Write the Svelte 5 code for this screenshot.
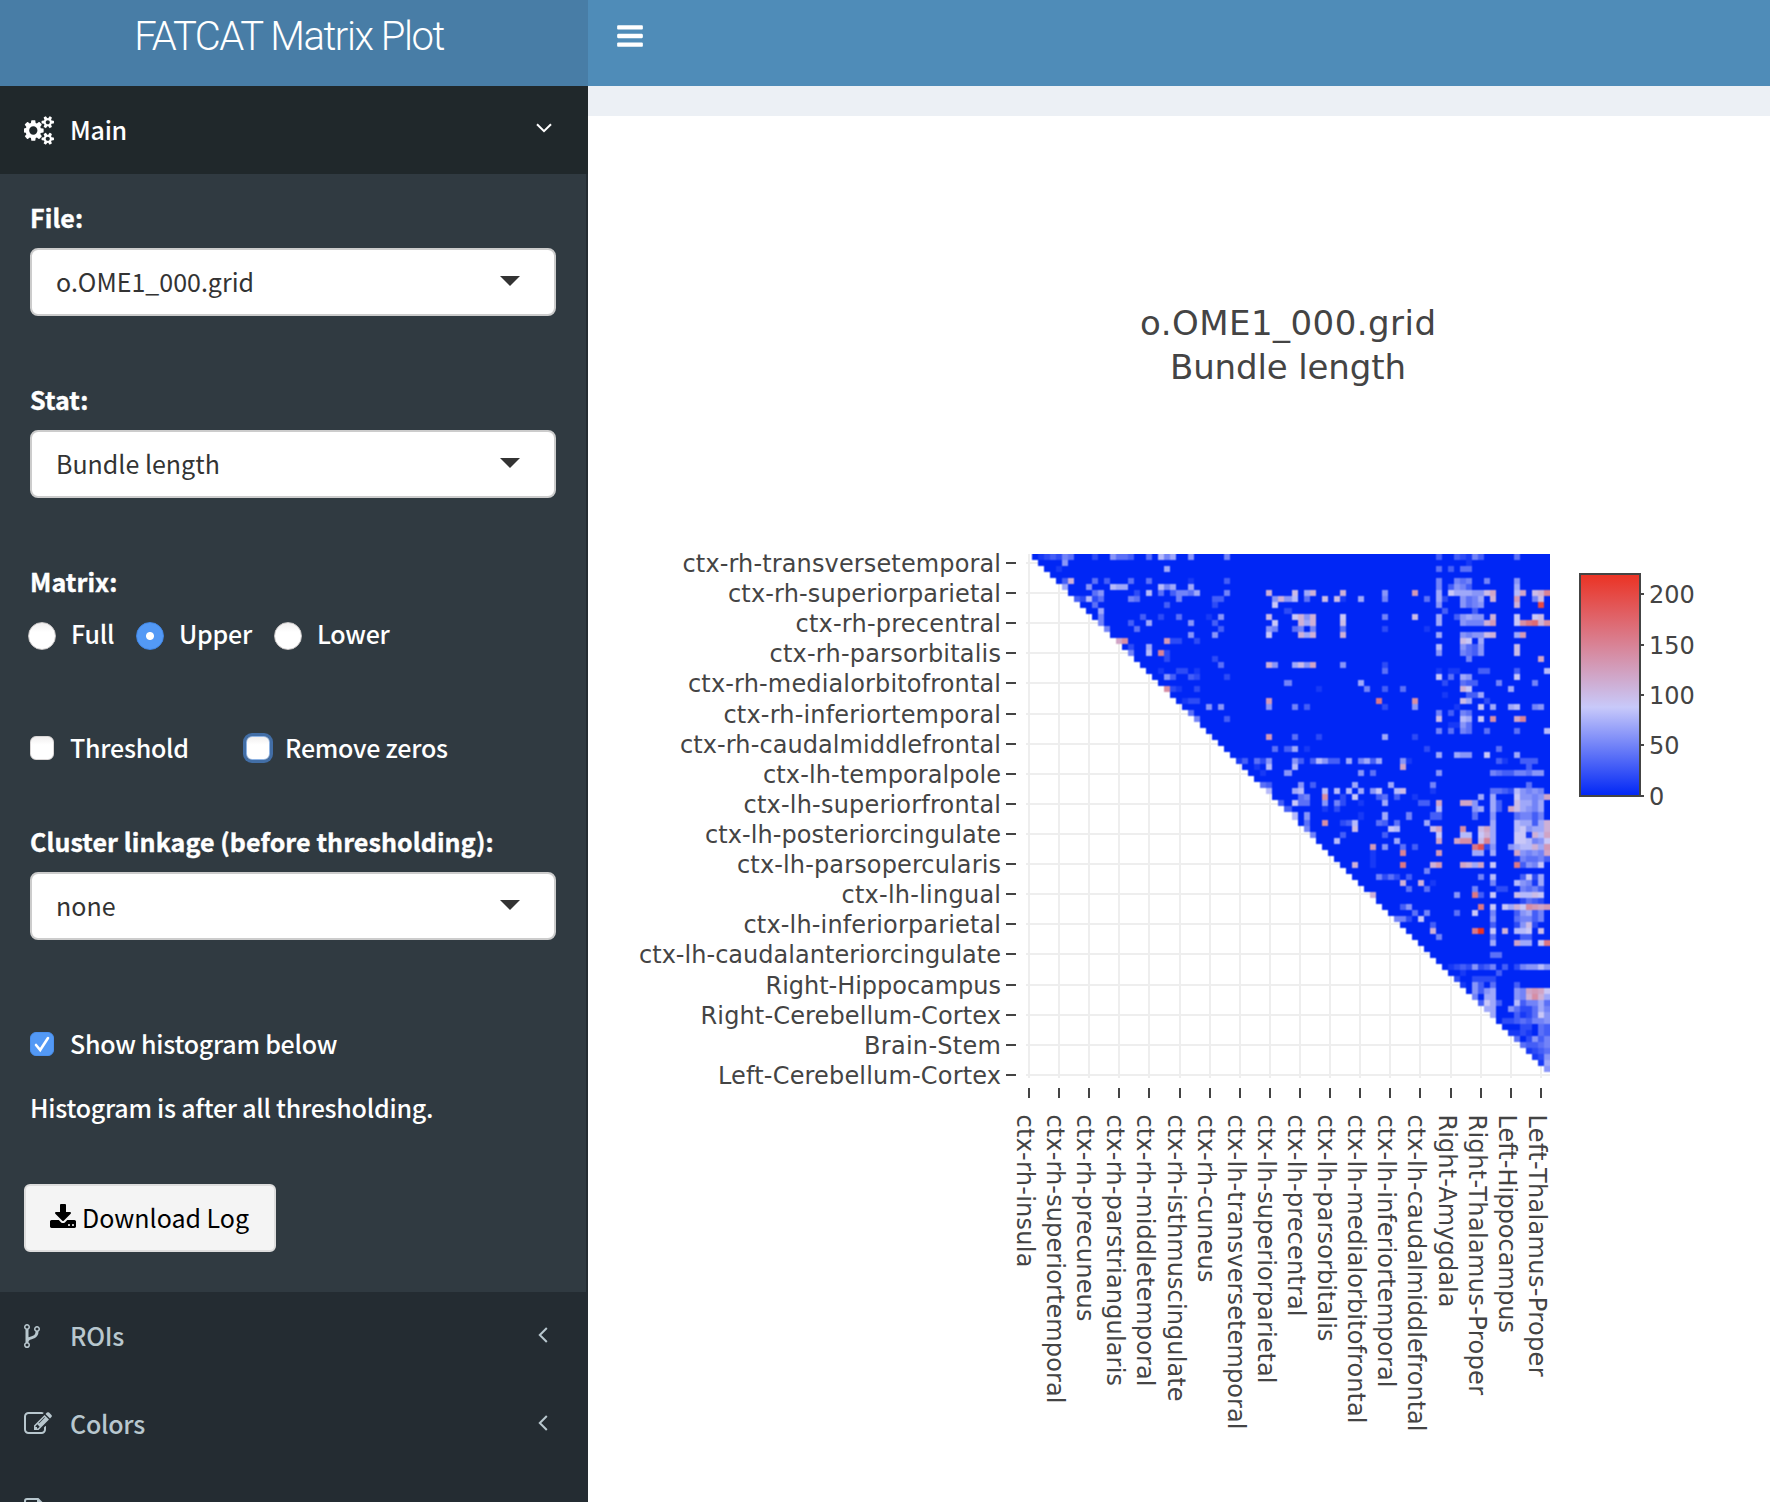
<script>
  import { onMount } from 'svelte';

  const icons = {
    bars: 'M1664 1344v128q0 26-19 45t-45 19h-1408q-26 0-45-19t-19-45v-128q0-26 19-45t45-19h1408q26 0 45 19t19 45zm0-512v128q0 26-19 45t-45 19h-1408q-26 0-45-19t-19-45v-128q0-26 19-45t45-19h1408q26 0 45 19t19 45zm0-512v128q0 26-19 45t-45 19h-1408q-26 0-45-19t-19-45v-128q0-26 19-45t45-19h1408q26 0 45 19t19 45z',
    download: 'M1344 1344q0-26-19-45t-45-19-45 19-19 45 19 45 45 19 45-19 19-45zm256 0q0-26-19-45t-45-19-45 19-19 45 19 45 45 19 45-19 19-45zm128-224v320q0 40-28 68t-68 28h-1472q-40 0-68-28t-28-68v-320q0-40 28-68t68-28h465l135 136q58 56 136 56t136-56l136-136h464q40 0 68 28t28 68zm-325-569q17 41-14 70l-448 448q-18 19-45 19t-45-19l-448-448q-31-29-14-70 17-39 59-39h256v-448q0-26 19-45t45-19h256q26 0 45 19t19 45v448h256q42 0 59 39z',
    cogs: 'M832 896q0-106-75-181t-181-75-181 75-75 181 75 181 181 75 181-75 75-181zm768 512q0-52-38-90t-90-38-90 38-38 90q0 53 37.5 90.5t90.5 37.5 90.5-37.5 37.5-90.5zm0-1024q0-52-38-90t-90-38-90 38-38 90q0 53 37.5 90.5t90.5 37.5 90.5-37.5 37.5-90.5zm-384 421v185q0 10-7 19.5t-16 10.5l-155 24q-11 35-32 76 34 48 90 115 7 11 7 20 0 12-7 19-23 30-82.5 89.5t-78.5 59.5q-11 0-21-7l-115-90q-37 19-77 31-11 108-23 155-7 24-30 24h-186q-11 0-20-7.5t-10-17.5l-23-153q-34-10-75-31l-118 89q-7 7-20 7-11 0-21-8-144-133-144-160 0-9 7-19 10-14 41-53t47-61q-23-44-35-82l-152-24q-10-1-17-9.5t-7-19.5v-185q0-10 7-19.5t16-10.5l155-24q11-35 32-76-34-48-90-115-7-11-7-20 0-12 7-20 22-30 82-89t79-59q11 0 21 7l115 90q34-18 77-32 11-108 23-154 7-24 30-24h186q11 0 20 7.5t10 17.5l23 153q34 10 75 31l118-89q8-7 20-7 11 0 21 8 144 133 144 160 0 8-7 19-12 16-42 54t-45 60q23 48 34 82l152 23q10 2 17 10.5t7 19.5zm640 533v140q0 16-149 31-12 27-30 52 51 113 51 138 0 4-4 7-122 71-124 71-8 0-46-47t-52-68q-20 2-30 2t-30-2q-14 21-52 68t-46 47q-2 0-124-71-4-3-4-7 0-25 51-138-18-25-30-52-149-15-149-31v-140q0-16 149-31 13-29 30-52-51-113-51-138 0-4 4-7 4-2 35-20t59-34 30-16q8 0 46 46.5t52 67.5q20-2 30-2t30 2q51-71 92-112l6-2q4 0 124 70 4 3 4 7 0 25-51 138 17 23 30 52 149 15 149 31zm0-1024v140q0 16-149 31-12 27-30 52 51 113 51 138 0 4-4 7-122 71-124 71-8 0-46-47t-52-68q-20 2-30 2t-30-2q-14 21-52 68t-46 47q-2 0-124-71-4-3-4-7 0-25 51-138-18-25-30-52-149-15-149-31v-140q0-16 149-31 13-29 30-52-51-113-51-138 0-4 4-7 4-2 35-20t59-34 30-16q8 0 46 46.5t52 67.5q20-2 30-2t30 2q51-71 92-112l6-2q4 0 124 70 4 3 4 7 0 25-51 138 17 23 30 52 149 15 149 31z',
    fork: 'M672 1472q0-40-28-68t-68-28-68 28-28 68 28 68 68 28 68-28 28-68zm0-1152q0-40-28-68t-68-28-68 28-28 68 28 68 68 28 68-28 28-68zm640 128q0-40-28-68t-68-28-68 28-28 68 28 68 68 28 68-28 28-68zm96 0q0 52-26 96.5t-70 69.5q-2 287-226 414-67 38-203 81-128 40-169.5 71t-41.5 100v26q44 25 70 69.5t26 96.5q0 80-56 136t-136 56-136-56-56-136q0-52 26-96.5t70-69.5v-820q-44-25-70-69.5t-26-96.5q0-80 56-136t136-56 136 56 56 136q0 52-26 96.5t-70 69.5v497q54-26 154-57 55-17 87.5-29.5t70.5-31 59-39.5 40.5-51 28-69.5 8.5-91.5q-44-25-70-69.5t-26-96.5q0-80 56-136t136-56 136 56 56 136z',
    edit: 'M888 1184l116-116-152-152-116 116v56h96v96h56zm440-720q-16-16-33 1l-350 350q-17 17-1 33t33-1l350-350q17-17 1-33zm80 594v190q0 119-84.5 203.5t-203.5 84.5h-832q-119 0-203.5-84.5t-84.5-203.5v-832q0-119 84.5-203.5t203.5-84.5h832q63 0 117 25 15 7 18 23 3 17-9 29l-49 49q-14 14-32 8-23-6-45-6h-832q-66 0-113 47t-47 113v832q0 66 47 113t113 47h832q66 0 113-47t47-113v-126q0-13 9-22l64-64q15-15 35-7t20 29zm-96-738l288 288-672 672h-288v-288zm444 132l-92 92-288-288 92-92q28-28 68-28t68 28l152 152q28 28 28 68t-28 68z'
  };

  // label text and its drawn length
  const yLabels = [
    ['ctx-rh-transversetemporal', 318.5], ['ctx-rh-superiorparietal', 273], ['ctx-rh-precentral', 205.5],
    ['ctx-rh-parsorbitalis', 231.5], ['ctx-rh-medialorbitofrontal', 313], ['ctx-rh-inferiortemporal', 277.5],
    ['ctx-rh-caudalmiddlefrontal', 321], ['ctx-lh-temporalpole', 238], ['ctx-lh-superiorfrontal', 257.5],
    ['ctx-lh-posteriorcingulate', 296], ['ctx-lh-parsopercularis', 264], ['ctx-lh-lingual', 159.5],
    ['ctx-lh-inferiorparietal', 257.5], ['ctx-lh-caudalanteriorcingulate', 362], ['Right-Hippocampus', 235.5],
    ['Right-Cerebellum-Cortex', 300.5], ['Brain-Stem', 137], ['Left-Cerebellum-Cortex', 283]
  ];
  const xLabels = [
    ['ctx-rh-insula', 153], ['ctx-rh-superiortemporal', 289], ['ctx-rh-precuneus', 207],
    ['ctx-rh-parstriangularis', 271.5], ['ctx-rh-middletemporal', 272], ['ctx-rh-isthmuscingulate', 287],
    ['ctx-rh-cuneus', 168], ['ctx-lh-transversetemporal', 315], ['ctx-lh-superiorparietal', 269],
    ['ctx-lh-precentral', 202], ['ctx-lh-parsorbitalis', 227], ['ctx-lh-medialorbitofrontal', 309],
    ['ctx-lh-inferiortemporal', 273], ['ctx-lh-caudalmiddlefrontal', 317], ['Right-Amygdala', 193],
    ['Right-Thalamus-Proper', 280.5], ['Left-Hippocampus', 218.5], ['Left-Thalamus-Proper', 262]
  ];
  const offset = (i) => 30 * i + (i >= 5 ? 1 : 0) + (i >= 14 ? 1 : 0);
  const barTicks = [[200, 594], [150, 645], [100, 695], [50, 745], [0, 796]];

  // One string per matrix row: a start column, then one letter per cell
  // (a = 10, b = 20, ...); cells that are not listed are zero.
  const rows = [
    '2ab4cbed11b14fdec16d20d22heg27f33e68c71cba74ec81d',
    '6f73a',
    '5a23g68d70c72dd',
    '',
    '6ck11d13c17d20d27a33c68e71ede76e81f',
    '6g10f14hgg22heg27g68e70cfec81g',
    '11df18b20h22d24ceedg33e40k44j46gk52k59f64m68g70igggffjl81hl84jko',
    '8cbhbd17ed25e31cc41fkfh46d49j51ja55g59e66d68gb72fdeg77k81m84ej',
    '11d23c31b41i68f72fdef81k85t',
    '12g43b69c74c',
    '12e19c22b25d30a32f40j44ikfk52i59e64j68g71cfgff77k81i84ij',
    '12e17c20g27f31c41i45kgk52j68g72feeekm81inpqkn',
    '13e18d32c40fe44de47e52d59b66a',
    '27f31f40i45kgk52k68g72feffjk81gm',
    '15ln23m24bb28b72ji75g',
    '17b20g68h72fdcf81j',
    '17e20h22ob68f72edcf81j',
    '23b31b73e85l',
    '32d40kf44gjfl52f59b',
    '22a25bb28a59d68a70aa75cc81c86h',
    '23fc27cb33b68i70d72gf81i',
    '43e55g69b72dcc78e84e',
    '23nba28b48a56e59c62d72ki80g',
    '69a73ccg',
    '26abb40m58p64n72jg76b',
    '30f32f40f44e46c59b64f71a75i77g80gh84ef',
    '27d68e70c72ed',
    '28e33c68j72hg75i77n81lo',
    '70aafd',
    '68e70d72ed76d81d86h',
    '40m44d48b59g64b',
    '',
    '41d43cg46a66b78d',
    '68g71gff76i81g',
    '35ac38dbf44fc47chfcc53g55egcg62fa78ca82ccc',
    '38a40h44h62l83c',
    '39a43f55f57d68f77edcceedff',
    '',
    '39dc45f47c54g60g67e83d',
    '40h44gh49h51h53h55g57fi61hj67a77ddcbhfefe',
    '45de49n52b54i58cd61c64a75g77g81iffefl',
    '42c44idd49f51eb55a59g65cc68l72llf77gc81jggeg',
    '43c49a51b68h74fg77gc80ljgfeg',
    '44h46f55a59g63e67cc74d77f81deece',
    '46d49n52bch58dc61d66g77g81hggcgk',
    '46e54j60ih67jl72n75jlg81hifggk',
    '47e52c59c68i72hh75ikg81iiakhl',
    '51h61g68l71lnn75jog81iihefi',
    '57m59f62d64c74psb77f80fghhkgm',
    '57a62o68m74gg77g81lfefel',
    '57a81aeddec',
    '54k57a62p67km72lkgl77i81pcfei',
    '66e',
    '58ebdb63c75e77h82cibg',
    '62k65k67a77e81hfeag',
    '63d66d74e78bb82edec',
    '57k71f74pc77i81jhhji',
    '82bdcb',
    '62cf75p77i79igkinmlm',
    '64d66e71d74i77e81cfgce',
    '61eeb65i77f81deece',
    '67c77c81bfjb',
    '67k74pv77i79k81hhi85j',
    '68e77d82cc',
    '77g81lgg85ip',
    '',
    '77dd',
    '',
    '70abcbfbce79c81beffhf',
    '72a78c',
    '71b74bbbb',
    '72a74fc77d81c',
    '74fcfg81felmli',
    '74e76gg81feknkg',
    '75cigc81hceegd',
    '76gg80fdbbdge',
    '77g81cabdif',
    '79bbcdceef',
    '82bb85dc',
    '80aab83a85dc',
    '81d83bfce',
    '82dccde',
    '83abcd',
    '84abf',
    '85ag',
    '86f'
  ];

  const stops = [[0, [0, 38, 245]], [88, [200, 201, 250]], [220, [235, 50, 35]]];
  function colour(v) {
    const [lo, hi] = v <= 88 ? [stops[0], stops[1]] : [stops[1], stops[2]];
    const t = (v - lo[0]) / (hi[0] - lo[0]);
    return `rgb(${lo[1].map((c, i) => Math.round(c + (hi[1][i] - c) * t)).join(',')})`;
  }

  let canvas;
  // Cells are 3 units wide; the middle one takes the leftover unit.
  const edge = (i) => 3 * i + (i > 43 ? 1 : 0);
  onMount(() => {
    const ctx = canvas.getContext('2d');
    const cell = (r, c, v) => {
      ctx.fillStyle = colour(v);
      ctx.fillRect(edge(c), edge(r), edge(c + 1) - edge(c), edge(r + 1) - edge(r));
    };
    rows.forEach((row, r) => {
      for (let c = r + 1; c < 87; c++) cell(r, c, 0);
      for (const [, start, run] of row.matchAll(/(\d+)([a-z]+)/g)) {
        [...run].forEach((ch, k) => {
          const c = +start + k;
          if (c > r && c < 87) cell(r, c, (ch.charCodeAt(0) - 96) * 10);
        });
      }
    });
  });
</script>

{#snippet icon(name, w = 1792)}
  <svg class="icon" class:wide={w > 1792} viewBox="0 0 {w} 1792"><path d={icons[name]} /></svg>
{/snippet}

{#snippet select(label, value)}
  <div class="field">
    <div class="label">{label}</div>
    <div class="select"><span>{value}</span><i class="caret"></i></div>
  </div>
{/snippet}

<div class="app">
  <aside>
    <div class="logo"><span>FATCAT Matrix Plot</span></div>
    <div class="item active">
      <span class="slot">{@render icon('cogs', 1920)}</span>
      <span class="name">Main</span>
      <svg class="angle down" viewBox="0 0 16 10"><path d="M1 1.2l7 7 7-7" /></svg>
    </div>
    <div class="panel">
      {@render select('File:', 'o.OME1_000.grid')}
      {@render select('Stat:', 'Bundle length')}
      <div class="label">Matrix:</div>
      <div class="radios">
        <div class="opt full"><i class="radio"></i><span>Full</span></div>
        <div class="opt upper"><i class="radio on"></i><span>Upper</span></div>
        <div class="opt"><i class="radio"></i><span>Lower</span></div>
      </div>
      <div class="checks">
        <div class="opt threshold"><i class="check"></i><span>Threshold</span></div>
        <div class="opt"><i class="check focus"></i><span>Remove zeros</span></div>
      </div>
      <div class="cluster">{@render select('Cluster linkage (before thresholding):', 'none')}</div>
      <div class="opt hist">
        <i class="check on"><svg viewBox="0 0 24 24"><path d="M6 13l4.2 5L18 6" /></svg></i>
        <span>Show histogram below</span>
      </div>
      <div class="note">Histogram is after all thresholding.</div>
      <div class="button">{@render icon('download')}<span>Download Log</span></div>
    </div>
    <div class="item">
      <span class="slot fork">{@render icon('fork')}</span>
      <span class="name">ROIs</span>
      <svg class="angle" viewBox="0 0 10 16"><path d="M8.8 1l-7 7 7 7" /></svg>
    </div>
    <div class="item">
      <span class="slot">{@render icon('edit')}</span>
      <span class="name">Colors</span>
      <svg class="angle" viewBox="0 0 10 16"><path d="M8.8 1l-7 7 7 7" /></svg>
    </div>
    <div class="item last">
      <svg class="file" viewBox="0 0 22 28"><path d="M1 26V3Q1 1 3 1H14L21 8V26ZM14 1V8H21" /></svg>
    </div>
  </aside>

  <main>
    <div class="navbar">{@render icon('bars')}</div>
    <div class="band"></div>
    <div class="plot">
      <svg class="axes" viewBox="588 116 1182 1386">
        <defs>
          <linearGradient id="scale" x1="0" y1="1" x2="0" y2="0">
            {#each stops as [v, c]}
              <stop offset={v / 220} stop-color="rgb({c.join(',')})" />
            {/each}
          </linearGradient>
        </defs>
        <text class="title" x="1288" y="335" textLength="296">o.OME1_000.grid</text>
        <text class="title" x="1288" y="379" textLength="236">Bundle length</text>
        {#each yLabels as [text, len], i}
          <path class="grid" d="M1026 {563 + offset(i)}H1550M{1029 + offset(i)} 554V1078" />
          <path class="tick" d="M1006 {563 + offset(i)}h10M{1029 + offset(i)} 1088v10" />
          <text class="ylab" x="1001" y={571.6 + offset(i)} textLength={len}>{text}</text>
        {/each}
        {#each xLabels as [text, len], i}
          <text transform="translate({1016.5 + offset(i)} 1114.5) rotate(90)" textLength={len}>{text}</text>
        {/each}
        <rect x="1580" y="574" width="60" height="222" fill="url(#scale)" stroke="#444" stroke-width="2" />
        {#each barTicks as [v, y]}
          <path class="tick" d="M1640 {y}h4" />
          <text x="1649" y={y + 8.5}>{v}</text>
        {/each}
      </svg>
      <canvas bind:this={canvas} width="262" height="262"></canvas>
    </div>
  </main>
</div>

<style>
  :global(body) { margin: 0; background: #fff; overflow: hidden; }
  .app { display: flex; width: 1770px; height: 1502px; overflow: hidden;
    font-family: 'Noto Sans CJK JP', 'Noto Sans', sans-serif; font-size: 25px; color: #fff; }
  aside { width: 588px; flex: none; background: #242c32; overflow: hidden; }
  .logo { height: 86px; background: #487da6; text-align: center; line-height: 74px;
    font-family: Roboto, 'Liberation Sans', sans-serif; font-weight: 300; font-size: 40px; letter-spacing: -1.45px; }
  .logo span { margin-right: 10px; }
  .item { display: flex; align-items: center; height: 88px; padding: 0 36px 0 24px; box-sizing: border-box;
    color: #b8c7ce; font-weight: 500; line-height: 30px; letter-spacing: -0.25px; }
  .item.active { background: #20282b; color: #fff; }
  .slot { width: 46px; display: flex; }
  .fork .icon { margin-left: -6px; }
  .name { flex: 1; margin-bottom: 2px; }
  .icon { width: 28px; height: 28px; fill: currentColor; flex: none; display: block; }
  .icon.wide { width: 31px; height: 29px; }
  .angle { width: 10px; height: 16px; fill: none; stroke: currentColor; stroke-width: 2; margin-right: 4px; margin-bottom: 2px; }
  .angle.down { width: 16px; height: 10px; margin-right: 0; margin-bottom: 5px; }
  .last { align-items: flex-start; padding-top: 30px; }
  .file { width: 22px; height: 28px; fill: none; stroke: currentColor; stroke-width: 2; }
  .panel { box-sizing: border-box; width: 586px; height: 1118px; padding: 28px 30px 0; background: #303a41; line-height: 30px; }
  .field { margin-bottom: 68px; }
  .label { font-weight: 700; height: 46px; letter-spacing: 0.09px; -webkit-text-stroke: 0.4px #fff; }
  .select { box-sizing: border-box; height: 68px; border: 2px solid #ccc; border-radius: 8px; background: #fff; color: #333;
    display: flex; align-items: center; justify-content: space-between; padding: 0 34px 2px 24px; }
  .caret { border: 10px solid transparent; border-top-color: #333; border-bottom: 0; }
  .opt { display: flex; align-items: center; font-weight: 500; letter-spacing: -0.25px; }
  .opt span { margin-top: -2px; }
  .radios { display: flex; margin: 10px 0 0 -2px; height: 28px; }
  .radio { box-sizing: border-box; width: 28px; height: 28px; border-radius: 50%; margin-right: 15px;
    background: linear-gradient(#f1efef, #fff 35%); border: 1px solid #c9c6c6; }
  .radio.on { background: radial-gradient(circle, #fff 3.5px, #5399f5 4.5px); border-color: #4187e6; }
  .radios span { margin-top: -7px; }
  .full { width: 108px; }
  .upper { width: 138px; }
  .checks { display: flex; margin-top: 86px; height: 24px; }
  .check { box-sizing: border-box; width: 24px; height: 24px; border-radius: 6px; margin-right: 16px; flex: none;
    background: linear-gradient(#f1efef, #fff 35%); border: 1px solid #d8d5d5; }
  .check.focus { box-shadow: 0 0 0 3px #426ea6; border-color: #8fb4e4; margin-right: 15px; }
  .check.on { background: #5399f5; border-color: #4a90ee; }
  .check svg { display: block; width: 24px; height: 24px; margin: -1px; fill: none; stroke: #fff; stroke-width: 2.6; stroke-linecap: round; }
  .threshold { width: 216px; }
  .cluster { margin-top: 66px; }
  .hist { margin-top: 92px; height: 24px; }
  .note { font-weight: 500; margin-top: 36px; letter-spacing: -0.25px; }
  .button { box-sizing: border-box; display: flex; align-items: center; width: 252px; height: 68px; margin: 62px 0 0 -6px;
    padding-left: 23px; border: 2px solid #ddd; border-radius: 6px; background: #f4f4f4; color: #000; }
  .button span { margin: -2px 0 0 5px; }
  main { flex: 1; background: #fff; }
  .navbar { height: 86px; background: #4f8cb8; padding: 21px 0 0 27px; box-sizing: border-box; }
  .navbar .icon { width: 30px; height: 30px; }
  .band { height: 30px; background: #ecf0f5; }
  .plot { position: relative; height: 1386px; }
  .axes { display: block; width: 1182px; height: 1386px; }
  .axes text { font-family: 'DejaVu Sans', sans-serif; font-size: 24px; fill: #444; }
  .axes .title { font-size: 34px; text-anchor: middle; }
  .axes .ylab { text-anchor: end; }
  .grid { stroke: #eee; stroke-width: 2; }
  .tick { stroke: #444; stroke-width: 2; }
  canvas { position: absolute; left: 438px; top: 438px; width: 524px; height: 524px; }
</style>
